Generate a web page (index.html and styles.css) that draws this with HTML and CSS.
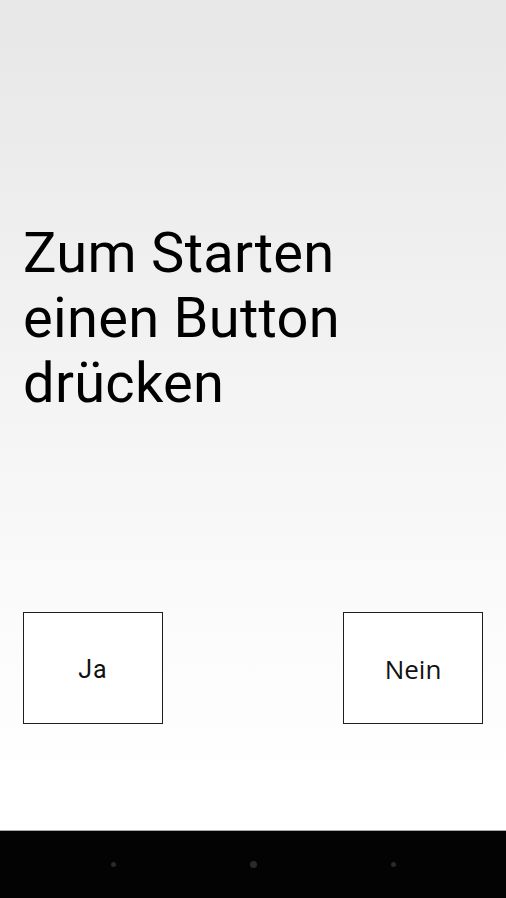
FILE: index.html
```html
<!DOCTYPE html>
<html lang="de">
<head>
<meta charset="utf-8">
<title>Start</title>
<link rel="stylesheet" href="styles.css">
</head>
<body>
<div class="screen">
  <main class="content">
    <h1 class="title">Zum Starten<br>einen Button<br>drücken</h1>
    <div class="buttons">
      <button class="btn btn-yes">Ja</button>
      <button class="btn btn-no">Nein</button>
    </div>
  </main>
  <nav class="navbar">
    <span class="dot"></span>
    <span class="dot dot-big"></span>
    <span class="dot"></span>
  </nav>
</div>
</body>
</html>
```
FILE: styles.css
```css
html, body {
  margin: 0;
  padding: 0;
}
body {
  font-family: Roboto, "Liberation Sans", sans-serif;
  background: #000;
}
.screen {
  width: 506px;
  height: 898px;
  display: flex;
  flex-direction: column;
}
.content {
  height: 831px;
  box-sizing: border-box;
  padding: 221px 23px 0 23px;
  background: linear-gradient(to bottom, #e7e7e7 0%, #f3f3f3 45%, #fbfbfb 75%, #ffffff 95%);
  border-bottom: 1px solid #a8a8a8;
}
.title {
  margin: 0;
  font-weight: 400;
  font-size: 56px;
  letter-spacing: 0.3px;
  line-height: 65px;
  color: #000;
}
.buttons {
  margin-top: 196px;
  display: flex;
  justify-content: space-between;
}
.btn {
  width: 140px;
  height: 112px;
  box-sizing: border-box;
  border: 1px solid #1e1e1e;
  background: #fff;
  color: #111;
  padding: 0;
}
.btn-yes {
  font-family: Roboto, "Liberation Sans", sans-serif;
  font-size: 25px;
  letter-spacing: 1px;
  padding-top: 2px;
}
.btn-no {
  font-family: "Open Sans", "Noto Sans", sans-serif;
  font-size: 26px;
  padding-top: 1px;
}
.navbar {
  flex: 1;
  background: #030303;
  display: flex;
  align-items: center;
  justify-content: space-between;
  padding: 0 110px 0 111px;
}
.dot {
  width: 5px;
  height: 5px;
  border-radius: 50%;
  background: #2a2a2a;
}
.dot-big {
  width: 7px;
  height: 7px;
}
```
